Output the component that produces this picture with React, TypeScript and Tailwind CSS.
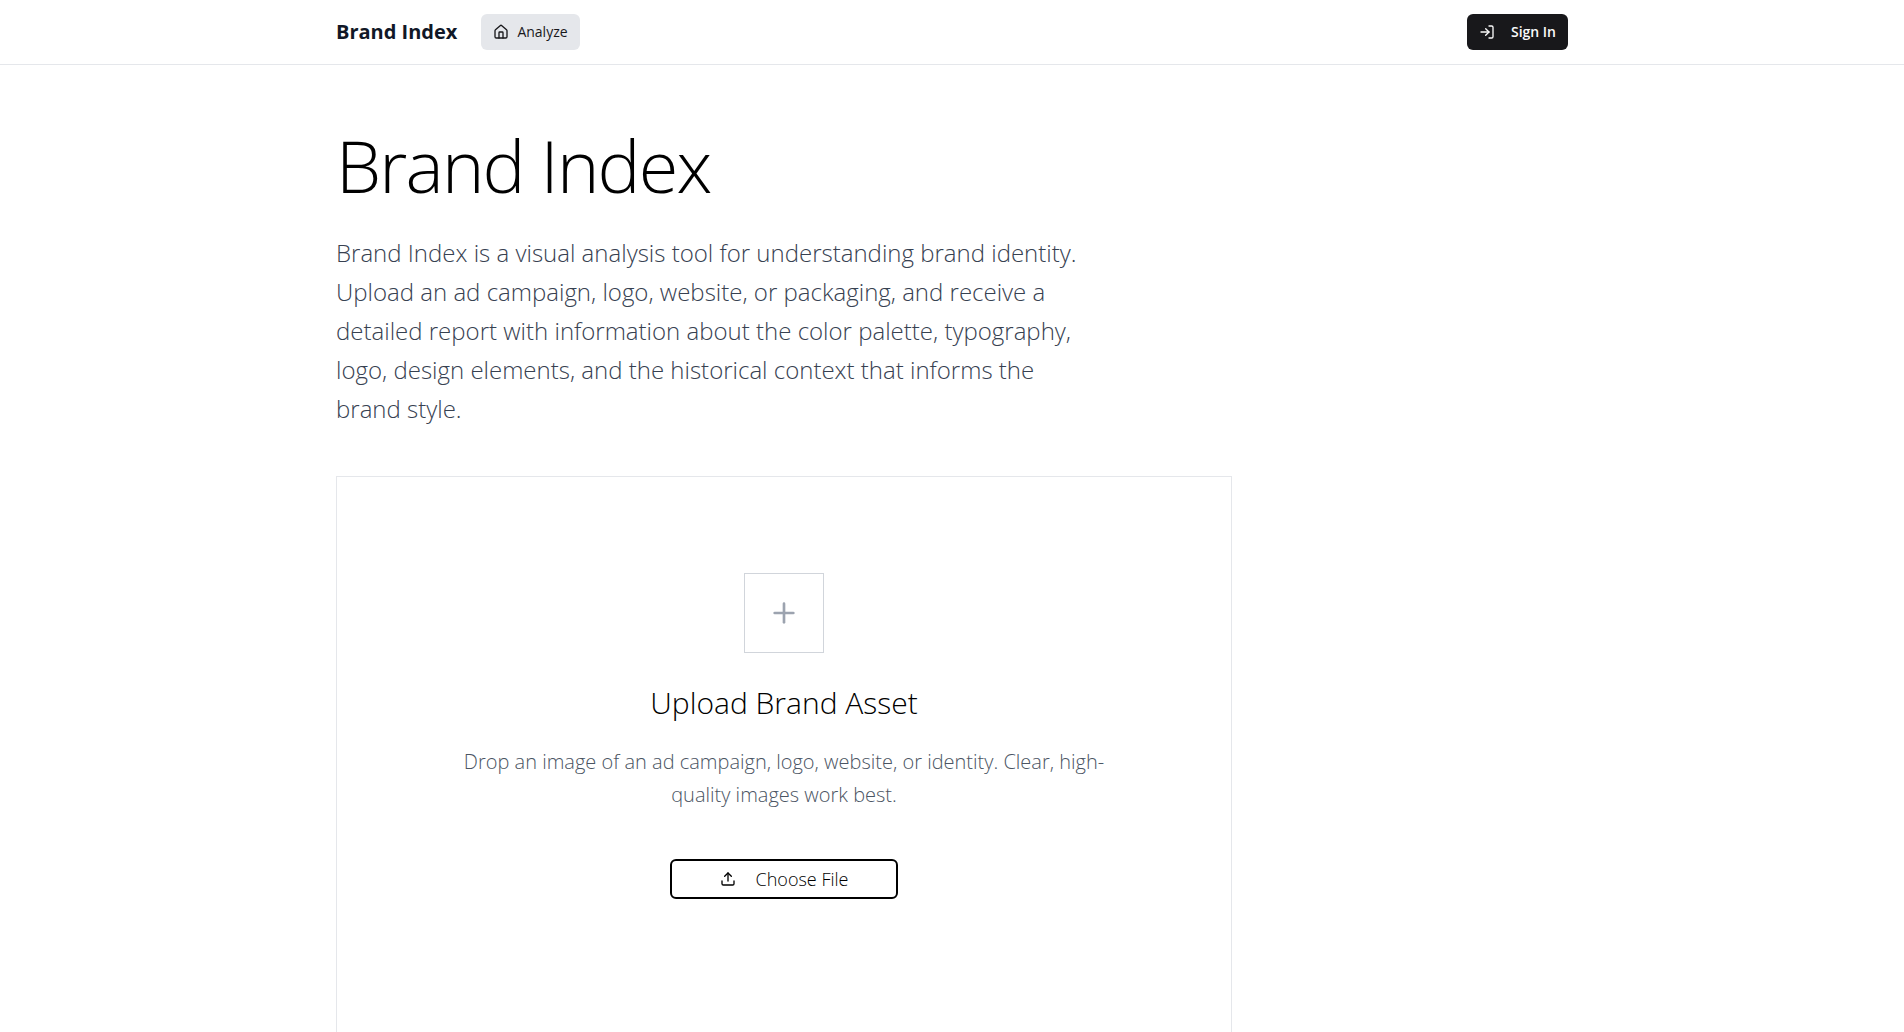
import { useRef, useState } from "react";
import { House, LogIn, Plus, Upload } from "lucide-react";

function Header() {
  return (
    <header className="border-b border-[#e5e7eb] bg-white">
      <div className="max-w-7xl mx-auto h-16 px-6 flex items-center justify-between">
        <div className="flex items-center gap-6">
          <a href="/" className="text-xl font-bold text-[#111827]">
            Brand Index
          </a>
          <nav>
            <a
              href="/analyze"
              className="h-9 px-3 flex items-center gap-2 rounded-md bg-[#e5e7eb] text-sm text-[#18181b]"
            >
              <House className="w-4 h-4" />
              Analyze
            </a>
          </nav>
        </div>
        <button
          type="button"
          className="h-9 px-3 flex items-center gap-4 rounded-md bg-[#18181b] text-sm font-semibold text-[#fafafa]"
        >
          <LogIn className="w-4 h-4" />
          Sign In
        </button>
      </div>
    </header>
  );
}

function UploadCard() {
  const inputRef = useRef<HTMLInputElement>(null);
  const [file, setFile] = useState<File | null>(null);

  return (
    <section
      onDragOver={(e) => e.preventDefault()}
      onDrop={(e) => {
        e.preventDefault();
        setFile(e.dataTransfer.files[0] ?? null);
      }}
      className="max-w-4xl min-h-[640px] p-24 border border-[#e5e7eb] flex flex-col items-center text-center"
    >
      <div className="w-20 h-20 mb-8 border border-[#d1d5db] flex items-center justify-center">
        <Plus className="w-8 h-8 text-[#9ca3af]" strokeWidth={2} />
      </div>
      <h2 className="mb-6 text-3xl leading-9 font-light text-black">Upload Brand Asset</h2>
      <p className="max-w-2xl mb-12 text-xl leading-[33px] font-light text-[#4b5563]">
        Drop an image of an ad campaign, logo, website, or identity. Clear, high-quality images work best.
      </p>
      <input
        ref={inputRef}
        type="file"
        accept="image/*"
        aria-label="Choose File"
        onChange={(e) => setFile(e.target.files?.[0] ?? null)}
        className="hidden"
      />
      <button
        type="button"
        onClick={() => inputRef.current?.click()}
        className="h-10 px-12 flex items-center gap-5 rounded-md border-2 border-black bg-white text-lg font-light text-black"
      >
        <Upload className="w-4 h-4" />
        {file ? file.name : "Choose File"}
      </button>
    </section>
  );
}

export default function App() {
  return (
    <div className="min-h-screen bg-white font-['Open_Sans',sans-serif]">
      <Header />
      <main className="max-w-7xl mx-auto px-6 py-16">
        <h1 className="mb-8 text-7xl leading-none font-light tracking-tight text-black">Brand Index</h1>
        <p className="max-w-3xl mb-12 text-2xl leading-[39px] font-light text-[#374151]">
          Brand Index is a visual analysis tool for understanding brand identity. Upload an ad
          campaign, logo, website, or packaging, and receive a detailed report with information
          about the color palette, typography, logo, design elements, and the historical context
          that informs the brand style.
        </p>
        <UploadCard />
      </main>
    </div>
  );
}
